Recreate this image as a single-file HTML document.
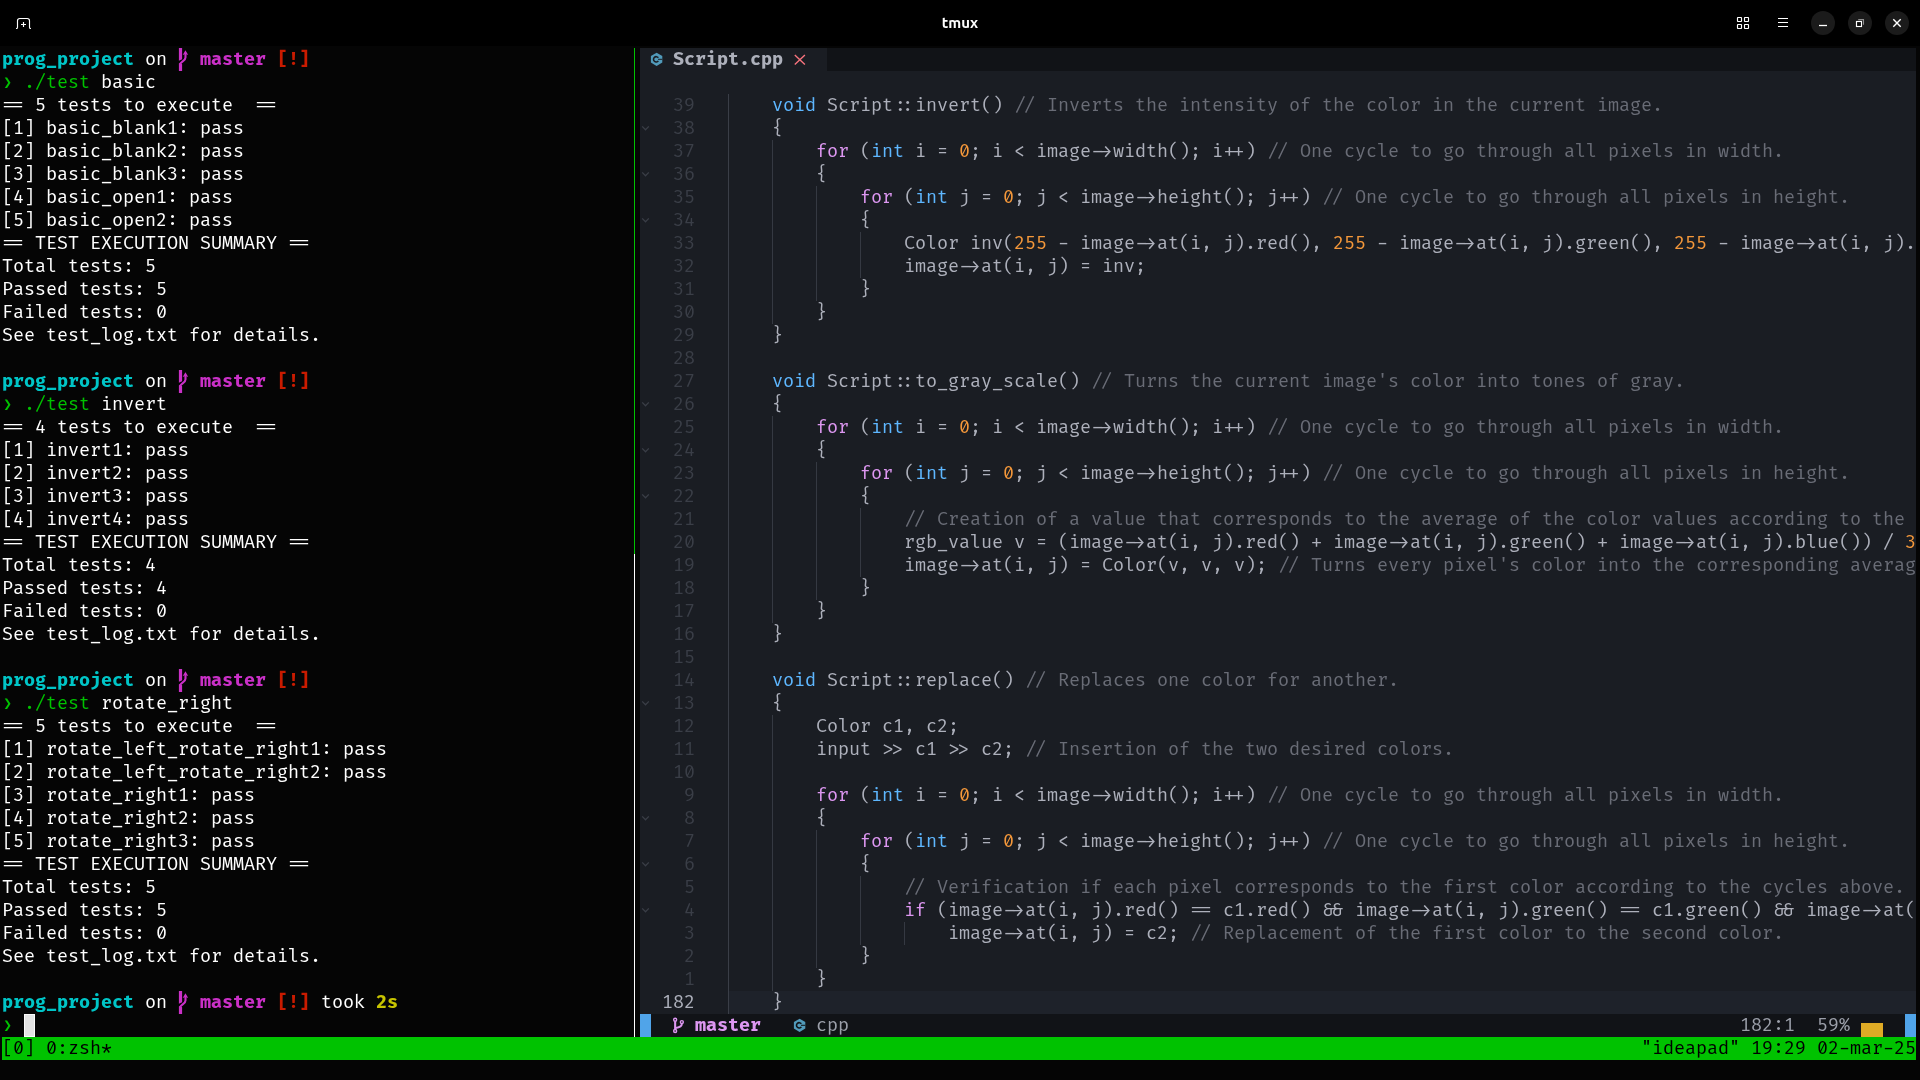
<!DOCTYPE html>
<html lang="en"><head><meta charset="utf-8"><title>tmux</title>
<style>

html,body{margin:0;padding:0;width:1920px;height:1080px;overflow:hidden;background:#050505}
body{position:relative;color:#fff;
 font-family:"Fira Code","Liberation Mono","DejaVu Sans Mono",monospace;
 font-size:18px;font-size-adjust:0.54;letter-spacing:calc(11px - 1ch);
 font-feature-settings:"calt" 1,"liga" 1;font-variant-ligatures:contextual common-ligatures;
 -webkit-font-smoothing:antialiased}
#w{position:absolute;left:0;top:0;width:1920px;height:1080px;will-change:transform}
.bar{position:absolute;left:0;top:0;width:1920px;height:46px;background:#000}
.ttl{position:absolute;left:0;width:1920px;top:0;height:46px;line-height:46px;text-align:center;color:#fff;
 font-family:"Ubuntu","Liberation Sans","DejaVu Sans",sans-serif;font-weight:bold;font-size:15px;font-size-adjust:none;letter-spacing:0}
.cb{position:absolute;top:11px;width:24px;height:24px;border-radius:12px;background:#1b1b1b}
.r{position:absolute;height:23px;line-height:23px;white-space:pre;overflow:hidden;margin-top:clamp(0px,calc((11.0769px - 1ch)*27.5),1px)}
.l{left:2px;width:627px}
.n{left:640px;width:1276px;color:#ADB0BB}
b{font-weight:bold;font-size-adjust:0.5446;letter-spacing:calc(11px - 1ch)}
i.ic{display:inline-block;width:11px;height:23px;vertical-align:top;font-style:normal;font-weight:normal;font-size-adjust:0.54}
i.ic svg{display:block;overflow:visible;margin-top:calc(-1*clamp(0px,calc((11.0769px - 1ch)*27.5),1px))}
.cy{color:#00C5C7}.mg{color:#CA30C7}.rd{color:#C91B00}.gr{color:#00C200}.yl{color:#C7C400}
.pc{display:inline-block;width:11px;height:23px;vertical-align:top;overflow:hidden;letter-spacing:0;font-size:14.5px;font-size-adjust:none;text-align:center}
.cur{position:absolute;left:24px;top:1014px;width:11px;height:23px;box-sizing:border-box;background:#e3e3e3;border:1px solid #fbfbfb}
.ty{color:#5EB7FF}.kw{color:#DD97F1}.nu{color:#F5983A}.cm{color:#696C76}
.ln{color:#3A3E47}.lc{color:#ADB0BB}
.fd{color:#3A3E47}
.ed{position:absolute;left:640px;top:48px;width:1276px;height:966px;background:#1A1D23}
.tl{position:absolute;left:827px;top:48px;width:1089px;height:23px;background:#111317}
.cl{position:absolute;left:728px;top:991px;width:1188px;height:23px;background:#1E222A}
.sl{position:absolute;left:640px;top:1014px;width:1276px;height:23px;background:#111317}
.g{position:absolute;width:1px;background:#353942}
.g0{background:#3A3E47}
.bl{position:absolute;background:#50A4E9;width:11px;height:23px;top:1014px}
.tm{left:2px;width:1914px;top:1037px;color:#000}
.tmb{position:absolute;left:2px;width:1914px;top:1037px;height:23px;background:#00C200}
.dv{position:absolute;left:634px;width:1.4px}

</style></head><body><div id="w">
<div class="bar"></div><div class="ttl">tmux</div>
<svg style="position:absolute;left:14px;top:14px" width="20" height="20" viewBox="0 0 20 20"><path d="M2 14.5H2.4Q3.5 14.5 3.5 13.2V6.8Q3.5 4.5 5.8 4.5H13.2Q15.5 4.5 15.5 6.8V13.2Q15.5 14.5 16.6 14.5H17" fill="none" stroke="#fff" stroke-width="1.15"/><path d="M9.5 8V13M7 10.5H12" stroke="#fff" stroke-width="1.15"/></svg>
<svg style="position:absolute;left:1736px;top:16px" width="14" height="14" viewBox="0 0 14 14"><g fill="none" stroke="#fff" stroke-width="1.15"><rect x="1.5" y="1.5" width="4" height="4" rx="0.4"/><rect x="8.5" y="1.5" width="4" height="4" rx="0.4"/><rect x="1.5" y="8.5" width="4" height="4" rx="0.4"/><rect x="8.5" y="8.5" width="4" height="4" rx="0.4"/></g></svg>
<svg style="position:absolute;left:1777px;top:16px" width="12" height="14" viewBox="0 0 12 14"><path d="M1 2.5H11M1 6.5H11M1 10.5H11" stroke="#fff" stroke-width="1.2"/></svg>
<div class="cb" style="left:1811px"></div><div class="cb" style="left:1848px"></div><div class="cb" style="left:1885px"></div>
<svg style="position:absolute;left:1811px;top:11px" width="24" height="24" viewBox="0 0 24 24"><path d="M8 14.5H16" stroke="#fff" stroke-width="1.3"/></svg>
<svg style="position:absolute;left:1848px;top:11px" width="24" height="24" viewBox="0 0 24 24"><rect x="8.5" y="10.5" width="5" height="5" fill="#0c0c0c" stroke="#fff" stroke-width="1.15"/><path d="M10.2 8.6H15.5V13.8" fill="none" stroke="#8e8e8e" stroke-width="1.1"/></svg>
<svg style="position:absolute;left:1885px;top:11px" width="24" height="24" viewBox="0 0 24 24"><path d="M8.3 8.3L15.7 15.7M15.7 8.3L8.3 15.7" stroke="#fff" stroke-width="1.4"/></svg>
<div class="r l" style="top:48px"><b class="cy">prog_project</b> on <b class="mg"><i class="ic"><svg class="" style="" width="11" height="23" viewBox="0 0 11 23"><path d="M0.9 0H4.1V11.3L0.9 12.8Z" fill="currentColor"/><path d="M0.9 23V15.4Q1.6 14.4 4.1 16.2V23Z" fill="currentColor"/><path d="M2.0 16.6C2.6 13.4 7.5 13.2 7.5 9.4V5.6" fill="none" stroke="currentColor" stroke-width="2.1"/><path d="M7.45 2.3L10.2 6.9L7.45 6.0L4.7 6.9Z" fill="currentColor"/></svg></i> master</b> <b class="rd">[!]</b></div>
<div class="r l" style="top:71px"><span class="gr pc">❯</span> <span class="gr">./test</span> basic</div>
<div class="r l" style="top:94px">== 5 tests to execute  ==</div>
<div class="r l" style="top:117px">[1] basic_blank1: pass</div>
<div class="r l" style="top:140px">[2] basic_blank2: pass</div>
<div class="r l" style="top:163px">[3] basic_blank3: pass</div>
<div class="r l" style="top:186px">[4] basic_open1: pass</div>
<div class="r l" style="top:209px">[5] basic_open2: pass</div>
<div class="r l" style="top:232px">== TEST EXECUTION SUMMARY ==</div>
<div class="r l" style="top:255px">Total tests: 5</div>
<div class="r l" style="top:278px">Passed tests: 5</div>
<div class="r l" style="top:301px">Failed tests: 0</div>
<div class="r l" style="top:324px">See test_log.txt for details.</div>
<div class="r l" style="top:370px"><b class="cy">prog_project</b> on <b class="mg"><i class="ic"><svg class="" style="" width="11" height="23" viewBox="0 0 11 23"><path d="M0.9 0H4.1V11.3L0.9 12.8Z" fill="currentColor"/><path d="M0.9 23V15.4Q1.6 14.4 4.1 16.2V23Z" fill="currentColor"/><path d="M2.0 16.6C2.6 13.4 7.5 13.2 7.5 9.4V5.6" fill="none" stroke="currentColor" stroke-width="2.1"/><path d="M7.45 2.3L10.2 6.9L7.45 6.0L4.7 6.9Z" fill="currentColor"/></svg></i> master</b> <b class="rd">[!]</b></div>
<div class="r l" style="top:393px"><span class="gr pc">❯</span> <span class="gr">./test</span> invert</div>
<div class="r l" style="top:416px">== 4 tests to execute  ==</div>
<div class="r l" style="top:439px">[1] invert1: pass</div>
<div class="r l" style="top:462px">[2] invert2: pass</div>
<div class="r l" style="top:485px">[3] invert3: pass</div>
<div class="r l" style="top:508px">[4] invert4: pass</div>
<div class="r l" style="top:531px">== TEST EXECUTION SUMMARY ==</div>
<div class="r l" style="top:554px">Total tests: 4</div>
<div class="r l" style="top:577px">Passed tests: 4</div>
<div class="r l" style="top:600px">Failed tests: 0</div>
<div class="r l" style="top:623px">See test_log.txt for details.</div>
<div class="r l" style="top:669px"><b class="cy">prog_project</b> on <b class="mg"><i class="ic"><svg class="" style="" width="11" height="23" viewBox="0 0 11 23"><path d="M0.9 0H4.1V11.3L0.9 12.8Z" fill="currentColor"/><path d="M0.9 23V15.4Q1.6 14.4 4.1 16.2V23Z" fill="currentColor"/><path d="M2.0 16.6C2.6 13.4 7.5 13.2 7.5 9.4V5.6" fill="none" stroke="currentColor" stroke-width="2.1"/><path d="M7.45 2.3L10.2 6.9L7.45 6.0L4.7 6.9Z" fill="currentColor"/></svg></i> master</b> <b class="rd">[!]</b></div>
<div class="r l" style="top:692px"><span class="gr pc">❯</span> <span class="gr">./test</span> rotate_right</div>
<div class="r l" style="top:715px">== 5 tests to execute  ==</div>
<div class="r l" style="top:738px">[1] rotate_left_rotate_right1: pass</div>
<div class="r l" style="top:761px">[2] rotate_left_rotate_right2: pass</div>
<div class="r l" style="top:784px">[3] rotate_right1: pass</div>
<div class="r l" style="top:807px">[4] rotate_right2: pass</div>
<div class="r l" style="top:830px">[5] rotate_right3: pass</div>
<div class="r l" style="top:853px">== TEST EXECUTION SUMMARY ==</div>
<div class="r l" style="top:876px">Total tests: 5</div>
<div class="r l" style="top:899px">Passed tests: 5</div>
<div class="r l" style="top:922px">Failed tests: 0</div>
<div class="r l" style="top:945px">See test_log.txt for details.</div>
<div class="r l" style="top:991px"><b class="cy">prog_project</b> on <b class="mg"><i class="ic"><svg class="" style="" width="11" height="23" viewBox="0 0 11 23"><path d="M0.9 0H4.1V11.3L0.9 12.8Z" fill="currentColor"/><path d="M0.9 23V15.4Q1.6 14.4 4.1 16.2V23Z" fill="currentColor"/><path d="M2.0 16.6C2.6 13.4 7.5 13.2 7.5 9.4V5.6" fill="none" stroke="currentColor" stroke-width="2.1"/><path d="M7.45 2.3L10.2 6.9L7.45 6.0L4.7 6.9Z" fill="currentColor"/></svg></i> master</b> <b class="rd">[!]</b> took <b class="yl">2s</b></div>
<div class="r l" style="top:1014px"><span class="gr pc">❯</span></div>
<div class="cur"></div>
<div class="dv" style="top:48px;height:506px;background:#00C200"></div>
<div class="dv" style="top:554px;height:483px;background:#fff"></div>
<div class="ed"></div><div class="tl"></div><div class="cl"></div><div class="sl"></div>
<div class="g g0" style="left:728px;top:94px;height:920px"></div>
<div class="g" style="left:772px;top:140px;height:184px"></div>
<div class="g" style="left:816px;top:186px;height:115px"></div>
<div class="g" style="left:860px;top:232px;height:46px"></div>
<div class="g" style="left:772px;top:416px;height:207px"></div>
<div class="g" style="left:816px;top:462px;height:138px"></div>
<div class="g" style="left:860px;top:508px;height:69px"></div>
<div class="g" style="left:772px;top:715px;height:276px"></div>
<div class="g" style="left:816px;top:830px;height:138px"></div>
<div class="g" style="left:860px;top:876px;height:69px"></div>
<div class="g" style="left:904px;top:922px;height:23px"></div>
<div class="r n" style="top:48px"> <span style="color:#519ABA"><i class="ic"><svg class="" style="" width="11" height="23" viewBox="0 0 11 23"><path d="M5.6 4.8L11.3 8.1V14.6L5.6 17.9L-0.1 14.6V8.1Z" fill="currentColor"/><path d="M7.32 9.78A2.65 2.65 0 1 0 7.32 12.82" fill="none" stroke="#1A1D23" stroke-width="1.55"/><path d="M7.0 11.3H11.3" stroke="#1A1D23" stroke-width="1.0"/></svg></i></span> <b>Script.cpp</b> <span style="color:#F8747E"><i class="ic"><svg class="" style="" width="11" height="23" viewBox="0 0 11 23"><path d="M0.8 7.1L10.9 16.6M10.9 7.1L0.8 16.6" fill="none" stroke="currentColor" stroke-width="1.4"/></svg></i></span></div>
<div class="r n" style="top:94px"> <span class="ln">  39</span>       <span class="ty">void</span> Script::invert() <span class="cm">// Inverts the intensity of the color in the current image.</span></div>
<div class="r n" style="top:117px"><span class="fd"><i class="ic"><svg class="" style="" width="11" height="23" viewBox="0 0 11 23"><path d="M2.2 9.4L5.5 12.8L8.8 9.4" fill="none" stroke="currentColor" stroke-width="1.25"/></svg></i></span><span class="ln">  38</span>       {</div>
<div class="r n" style="top:140px"> <span class="ln">  37</span>           <span class="kw">for</span> (<span class="ty">int</span> i = <span class="nu">0</span>; i &lt; image-&gt;width(); i++) <span class="cm">// One cycle to go through all pixels in width.</span></div>
<div class="r n" style="top:163px"><span class="fd"><i class="ic"><svg class="" style="" width="11" height="23" viewBox="0 0 11 23"><path d="M2.2 9.4L5.5 12.8L8.8 9.4" fill="none" stroke="currentColor" stroke-width="1.25"/></svg></i></span><span class="ln">  36</span>           {</div>
<div class="r n" style="top:186px"> <span class="ln">  35</span>               <span class="kw">for</span> (<span class="ty">int</span> j = <span class="nu">0</span>; j &lt; image-&gt;height(); j++) <span class="cm">// One cycle to go through all pixels in height.</span></div>
<div class="r n" style="top:209px"><span class="fd"><i class="ic"><svg class="" style="" width="11" height="23" viewBox="0 0 11 23"><path d="M2.2 9.4L5.5 12.8L8.8 9.4" fill="none" stroke="currentColor" stroke-width="1.25"/></svg></i></span><span class="ln">  34</span>               {</div>
<div class="r n" style="top:232px"> <span class="ln">  33</span>                   Color inv(<span class="nu">255</span> - image-&gt;at(i, j).red(), <span class="nu">255</span> - image-&gt;at(i, j).green(), <span class="nu">255</span> - image-&gt;at(i, j).</div>
<div class="r n" style="top:255px"> <span class="ln">  32</span>                   image-&gt;at(i, j) = inv;</div>
<div class="r n" style="top:278px"> <span class="ln">  31</span>               }</div>
<div class="r n" style="top:301px"> <span class="ln">  30</span>           }</div>
<div class="r n" style="top:324px"> <span class="ln">  29</span>       }</div>
<div class="r n" style="top:347px"> <span class="ln">  28</span>   </div>
<div class="r n" style="top:370px"> <span class="ln">  27</span>       <span class="ty">void</span> Script::to_gray_scale() <span class="cm">// Turns the current image's color into tones of gray.</span></div>
<div class="r n" style="top:393px"><span class="fd"><i class="ic"><svg class="" style="" width="11" height="23" viewBox="0 0 11 23"><path d="M2.2 9.4L5.5 12.8L8.8 9.4" fill="none" stroke="currentColor" stroke-width="1.25"/></svg></i></span><span class="ln">  26</span>       {</div>
<div class="r n" style="top:416px"> <span class="ln">  25</span>           <span class="kw">for</span> (<span class="ty">int</span> i = <span class="nu">0</span>; i &lt; image-&gt;width(); i++) <span class="cm">// One cycle to go through all pixels in width.</span></div>
<div class="r n" style="top:439px"><span class="fd"><i class="ic"><svg class="" style="" width="11" height="23" viewBox="0 0 11 23"><path d="M2.2 9.4L5.5 12.8L8.8 9.4" fill="none" stroke="currentColor" stroke-width="1.25"/></svg></i></span><span class="ln">  24</span>           {</div>
<div class="r n" style="top:462px"> <span class="ln">  23</span>               <span class="kw">for</span> (<span class="ty">int</span> j = <span class="nu">0</span>; j &lt; image-&gt;height(); j++) <span class="cm">// One cycle to go through all pixels in height.</span></div>
<div class="r n" style="top:485px"><span class="fd"><i class="ic"><svg class="" style="" width="11" height="23" viewBox="0 0 11 23"><path d="M2.2 9.4L5.5 12.8L8.8 9.4" fill="none" stroke="currentColor" stroke-width="1.25"/></svg></i></span><span class="ln">  22</span>               {</div>
<div class="r n" style="top:508px"> <span class="ln">  21</span>                   <span class="cm">// Creation of a value that corresponds to the average of the color values according to the </span></div>
<div class="r n" style="top:531px"> <span class="ln">  20</span>                   rgb_value v = (image-&gt;at(i, j).red() + image-&gt;at(i, j).green() + image-&gt;at(i, j).blue()) / <span class="nu">3</span></div>
<div class="r n" style="top:554px"> <span class="ln">  19</span>                   image-&gt;at(i, j) = Color(v, v, v); <span class="cm">// Turns every pixel's color into the corresponding averag</span></div>
<div class="r n" style="top:577px"> <span class="ln">  18</span>               }</div>
<div class="r n" style="top:600px"> <span class="ln">  17</span>           }</div>
<div class="r n" style="top:623px"> <span class="ln">  16</span>       }</div>
<div class="r n" style="top:646px"> <span class="ln">  15</span>   </div>
<div class="r n" style="top:669px"> <span class="ln">  14</span>       <span class="ty">void</span> Script::replace() <span class="cm">// Replaces one color for another.</span></div>
<div class="r n" style="top:692px"><span class="fd"><i class="ic"><svg class="" style="" width="11" height="23" viewBox="0 0 11 23"><path d="M2.2 9.4L5.5 12.8L8.8 9.4" fill="none" stroke="currentColor" stroke-width="1.25"/></svg></i></span><span class="ln">  13</span>       {</div>
<div class="r n" style="top:715px"> <span class="ln">  12</span>           Color c1, c2;</div>
<div class="r n" style="top:738px"> <span class="ln">  11</span>           input &gt;&gt; c1 &gt;&gt; c2; <span class="cm">// Insertion of the two desired colors.</span></div>
<div class="r n" style="top:761px"> <span class="ln">  10</span>   </div>
<div class="r n" style="top:784px"> <span class="ln">   9</span>           <span class="kw">for</span> (<span class="ty">int</span> i = <span class="nu">0</span>; i &lt; image-&gt;width(); i++) <span class="cm">// One cycle to go through all pixels in width.</span></div>
<div class="r n" style="top:807px"><span class="fd"><i class="ic"><svg class="" style="" width="11" height="23" viewBox="0 0 11 23"><path d="M2.2 9.4L5.5 12.8L8.8 9.4" fill="none" stroke="currentColor" stroke-width="1.25"/></svg></i></span><span class="ln">   8</span>           {</div>
<div class="r n" style="top:830px"> <span class="ln">   7</span>               <span class="kw">for</span> (<span class="ty">int</span> j = <span class="nu">0</span>; j &lt; image-&gt;height(); j++) <span class="cm">// One cycle to go through all pixels in height.</span></div>
<div class="r n" style="top:853px"><span class="fd"><i class="ic"><svg class="" style="" width="11" height="23" viewBox="0 0 11 23"><path d="M2.2 9.4L5.5 12.8L8.8 9.4" fill="none" stroke="currentColor" stroke-width="1.25"/></svg></i></span><span class="ln">   6</span>               {</div>
<div class="r n" style="top:876px"> <span class="ln">   5</span>                   <span class="cm">// Verification if each pixel corresponds to the first color according to the cycles above.</span></div>
<div class="r n" style="top:899px"><span class="fd"><i class="ic"><svg class="" style="" width="11" height="23" viewBox="0 0 11 23"><path d="M2.2 9.4L5.5 12.8L8.8 9.4" fill="none" stroke="currentColor" stroke-width="1.25"/></svg></i></span><span class="ln">   4</span>                   <span class="kw">if</span> (image-&gt;at(i, j).red() == c1.red() &amp;&amp; image-&gt;at(i, j).green() == c1.green() &amp;&amp; image-&gt;at(</div>
<div class="r n" style="top:922px"> <span class="ln">   3</span>                       image-&gt;at(i, j) = c2; <span class="cm">// Replacement of the first color to the second color.</span></div>
<div class="r n" style="top:945px"> <span class="ln">   2</span>               }</div>
<div class="r n" style="top:968px"> <span class="ln">   1</span>           }</div>
<div class="r n" style="top:991px"> <span class="lc"> 182</span>       }</div>
<div class="bl" style="left:640px"></div><div class="bl" style="left:1905px"></div>
<div style="position:absolute;left:1861px;top:1023px;width:22px;height:14px;background:#DFAB25"></div>
<div class="r n" style="top:1014px;color:#9B9FA9">   <b style="color:#DD97F1"><i class="ic"><svg class="" style="" width="11" height="23" viewBox="0 0 11 23"><g fill="none" stroke="currentColor"><path d="M2.15 7.2V15.6" stroke-width="2.1"/><path d="M8.85 9.8C8.85 12.9 6.2 13.5 2.6 13.9" stroke-width="2.0"/><circle cx="2.15" cy="5.75" r="1.5" stroke-width="1.4"/><circle cx="2.15" cy="17.0" r="1.5" stroke-width="1.4"/><circle cx="8.85" cy="8.1" r="1.5" stroke-width="1.4"/></g></svg></i> master</b>   <span style="color:#519ABA"><i class="ic"><svg class="" style="" width="11" height="23" viewBox="0 0 11 23"><path d="M5.6 4.8L11.3 8.1V14.6L5.6 17.9L-0.1 14.6V8.1Z" fill="currentColor"/><path d="M7.32 9.78A2.65 2.65 0 1 0 7.32 12.82" fill="none" stroke="#111317" stroke-width="1.55"/><path d="M7.0 11.3H11.3" stroke="#111317" stroke-width="1.0"/></svg></i></span> cpp</div>
<div class="r n" style="top:1014px;color:#9B9FA9">                                                                                                    182:1  59%</div>
<div class="tmb"></div>
<div class="r tm">[0] 0:zsh*                                                                                                                                           "ideapad" 19:29 02-mar-25</div>
</div></body></html>
